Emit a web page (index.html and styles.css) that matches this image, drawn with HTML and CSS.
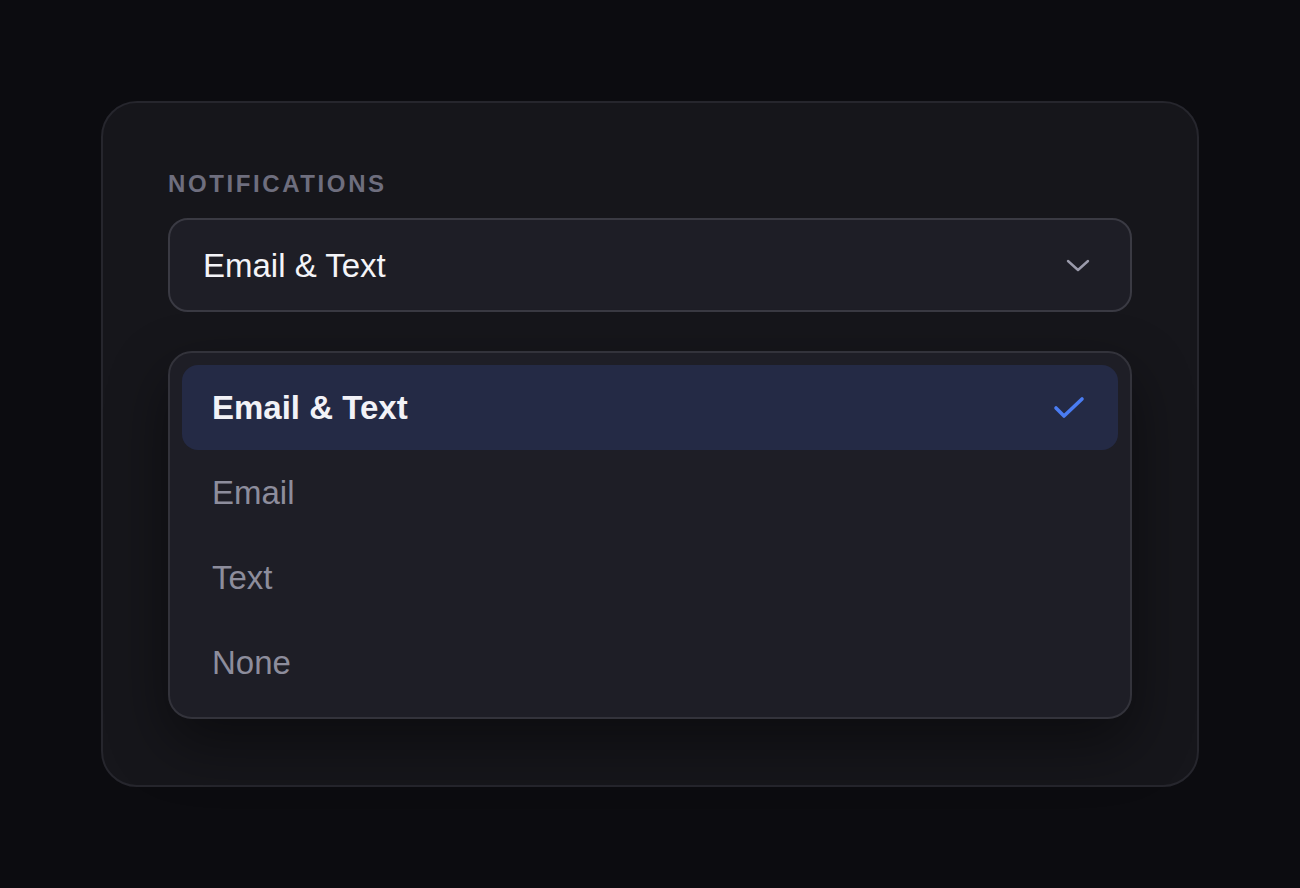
FILE: index.html
```html
<!DOCTYPE html>
<html lang="en">
<head>
    <meta charset="UTF-8">
    <meta name="viewport" content="width=device-width, initial-scale=1.0">
    <title>Notifications</title>
    <link rel="stylesheet" href="styles.css">
</head>
<body>
    <div class="card">
        <span class="field-label">Notifications</span>

        <div class="select">
            <span class="select-value">Email &amp; Text</span>
            <svg class="chevron" width="24" height="14" viewBox="0 0 24 14">
                <polyline points="2,2 12,11 22,2" fill="none" stroke="#9a9aaa" stroke-width="2.4" stroke-linecap="round" stroke-linejoin="round"/>
            </svg>
        </div>

        <ul class="menu">
            <li class="menu-item selected">
                <span>Email &amp; Text</span>
                <svg class="check" width="32" height="24" viewBox="0 0 32 24">
                    <polyline points="3,12 11,20 29,3" fill="none" stroke="#4a7cf2" stroke-width="3.6" stroke-linecap="round" stroke-linejoin="round"/>
                </svg>
            </li>
            <li class="menu-item">Email</li>
            <li class="menu-item">Text</li>
            <li class="menu-item">None</li>
        </ul>
    </div>
</body>
</html>
```

FILE: styles.css
```css
* {
    margin: 0;
    padding: 0;
    box-sizing: border-box;
}

body {
    font-family: 'Liberation Sans', Arial, sans-serif;
    background: #0c0c10;
    min-height: 100vh;
    display: flex;
    justify-content: center;
    align-items: center;
    color: #f2f2f6;
}

.card {
    width: 1098px;
    background: #16161b;
    border: 2px solid #26262d;
    border-radius: 36px;
    padding: 65px 65px 66px;
    display: flex;
    flex-direction: column;
}

.field-label {
    display: block;
    font-size: 24px;
    font-weight: bold;
    line-height: 32px;
    letter-spacing: 2.6px;
    text-transform: uppercase;
    color: #6e6e7e;
    margin-bottom: 18px;
}

.select {
    height: 94px;
    display: flex;
    align-items: center;
    justify-content: space-between;
    padding: 2px 40px 0 33px;
    background: #1e1e26;
    border: 2px solid #3a3a43;
    border-radius: 20px;
}

.select-value {
    font-size: 33px;
    color: #f4f4f8;
}

.chevron {
    display: block;
}

.menu {
    list-style: none;
    margin-top: 39px;
    padding: 12px;
    background: #1e1e26;
    border: 2px solid #33333b;
    border-radius: 24px;
    box-shadow: 0 24px 60px rgba(0, 0, 0, 0.45);
}

.menu-item {
    height: 85px;
    display: flex;
    align-items: center;
    justify-content: space-between;
    padding: 0 33px 0 30px;
    font-size: 33px;
    color: #8d8d9c;
    border-radius: 16px;
}

.menu-item.selected {
    background: #242a45;
    color: #f2f2f7;
    font-weight: bold;
}

.check {
    display: block;
}
```
